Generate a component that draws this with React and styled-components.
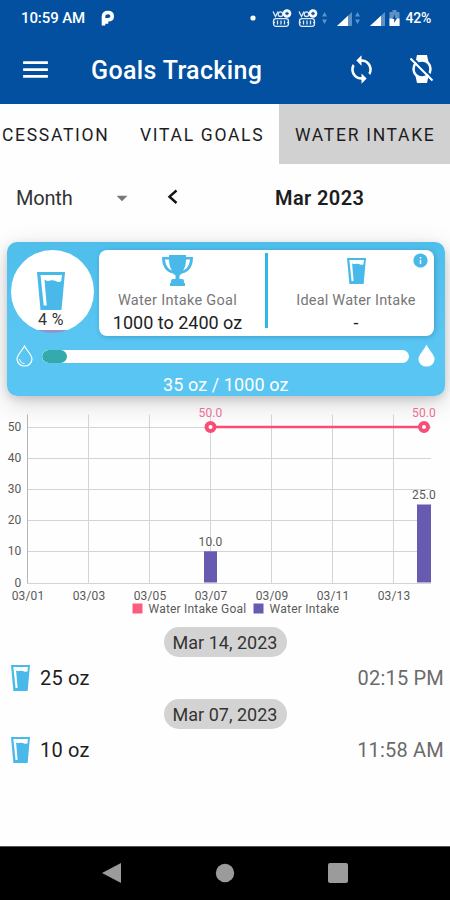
import styled, { createGlobalStyle } from "styled-components";
import { MdMenu, MdSync, MdArrowDropDown, MdInfo } from "react-icons/md";

const GlobalStyle = createGlobalStyle`
    * {
        box-sizing: border-box;
    }
    body {
        margin: 0;
        background: #fff;
        font-family: Roboto, "Liberation Sans", sans-serif;
    }
    svg {
        display: block;
        flex-shrink: 0;
    }
`
const Screen = styled.div`
    width: 450px;
    height: 900px;
    display: flex;
    flex-direction: column;
    overflow: hidden;
    background: #fefefe;
    color: #1d1d1f;
`
const Header = styled.header`
    height: 104px;
    background: #02509f;
    color: #fff;
`
const StatusBar = styled.div`
    height: 36px;
    padding: 0 19px 0 21px;
    display: flex;
    align-items: center;
    justify-content: space-between;
    font-size: 15px;
    font-weight: 500;
    white-space: nowrap;
`
const StatusLeft = styled.div`
    display: flex;
    align-items: center;
    gap: 16px;
    letter-spacing: -0.1px;
`
const StatusRight = styled.div`
    display: flex;
    align-items: center;
    font-size: 14px;
    letter-spacing: -0.2px;
`
const StatusItem = styled.div`
    margin-left: ${(props) => props.$gap}px;
`
const AppBar = styled.div`
    height: 68px;
    padding: 0 16px 2px 19px;
    display: flex;
    align-items: center;
`
const AppTitle = styled.h1`
    flex: 1;
    margin: 2px 0 0 39px;
    font-size: 25px;
    font-weight: 500;
    letter-spacing: 0.35px;
`
const Actions = styled.div`
    display: flex;
    align-items: center;
    gap: 33px;
`
const Tabs = styled.nav`
    height: 60px;
    display: flex;
    overflow: hidden;
`
const Tab = styled.div`
    width: ${(props) => props.$width}px;
    padding-left: ${(props) => props.$pad}px;
    padding-top: 2px;
    flex-shrink: 0;
    display: flex;
    align-items: center;
    white-space: nowrap;
    font-size: 17.5px;
    letter-spacing: 1.7px;
    background: ${(props) => (props.$active ? "#d1d1d1" : "transparent")};
`
const Period = styled.div`
    height: 78px;
    padding: 0 0 11px 16px;
    display: flex;
    align-items: center;
`
const RangeSelect = styled.div`
    width: 119px;
    display: flex;
    align-items: center;
    justify-content: space-between;
    font-size: 20px;
    letter-spacing: -0.2px;
    color: #333;
    svg {
        color: #777;
    }
`
const Previous = styled.div`
    margin-left: 31px;
`
const Month = styled.div`
    margin-left: 96px;
    font-size: 20px;
    font-weight: 600;
    letter-spacing: 0.4px;
`
const Card = styled.section`
    height: 154px;
    flex-shrink: 0;
    margin: 0 5.5px 0 6.5px;
    padding: 8px 10.5px 0 4px;
    border-radius: 10px;
    background: linear-gradient(#4fbeeb, #59c5f2 60%);
    box-shadow: 0 3px 8px rgba(0, 0, 0, 0.13), 0 7px 26px rgba(0, 0, 0, 0.17);
    position: relative;
`
const CardTop = styled.div`
    display: flex;
    justify-content: space-between;
`
const Gauge = styled.div`
    width: 83px;
    height: 83px;
    padding: 22px 2px 0 0;
    border-radius: 50%;
    overflow: hidden;
    display: flex;
    flex-direction: column;
    align-items: center;
    background: linear-gradient(#fff 80px, #9a8fca 80px);
    font-size: 16px;
    line-height: 19px;
    letter-spacing: 0.4px;
    color: #333;
`
const Panel = styled.div`
    width: 335px;
    height: 86px;
    border-radius: 8px;
    background: #fff;
    box-shadow: 1px 1px 5px rgba(0, 60, 100, 0.28);
    display: flex;
    position: relative;
`
const Goal = styled.div`
    width: 166px;
    padding: 5px ${(props) => props.$right || 0}px 0 ${(props) => props.$left || 0}px;
    display: flex;
    flex-direction: column;
    align-items: center;
    white-space: nowrap;
`
const GoalName = styled.div`
    margin-top: 5px;
    font-size: 14.5px;
    line-height: 19px;
    letter-spacing: ${(props) => props.$spacing}px;
    color: #777;
`
const GoalValue = styled.div`
    margin-top: 2px;
    font-size: 18px;
    line-height: 21px;
    color: #222;
`
const Divider = styled.div`
    width: 3px;
    height: 75px;
    margin-top: 3px;
    background: #2db8e8;
`
const InfoBadge = styled.div`
    position: absolute;
    top: 2px;
    right: 5px;
    color: #48b9e9;
`
const ProgressRow = styled.div`
    height: 22px;
    margin-top: 9px;
    padding: 0 0 0 5px;
    display: flex;
    align-items: center;
    justify-content: space-between;
    margin-right: -1px;
`
const Track = styled.div`
    width: 367px;
    height: 13px;
    border-radius: 7px;
    background: #fff;
    overflow: hidden;
`
const Fill = styled.div`
    height: 100%;
    border-radius: 7px;
    background: #34aaad;
`
const Amount = styled.div`
    padding: 7px 0 0 7px;
    text-align: center;
    font-size: 18px;
    line-height: 22px;
    letter-spacing: 0.1px;
    color: #fff;
`
const ChartArea = styled.div`
    height: 231px;
    flex-shrink: 0;
    position: relative;
`
const Day = styled.div`
    height: 72px;
    flex-shrink: 0;
    display: flex;
    flex-direction: column;
    align-items: center;
`
const DayLabel = styled.div`
    width: 123px;
    height: 30px;
    border-radius: 15px;
    background: #d3d3d3;
    text-align: center;
    font-size: 18px;
    line-height: 31px;
    color: #333;
`
const Entry = styled.div`
    width: 100%;
    height: 42px;
    padding: 0 6px 0 11px;
    display: flex;
    align-items: center;
    font-size: 20px;
`
const EntryAmount = styled.span`
    flex: 1;
    margin-left: 10px;
    letter-spacing: 0.2px;
`
const EntryTime = styled.span`
    color: #6b6b6b;
    letter-spacing: 0.2px;
`
const NavBar = styled.footer`
    height: 54px;
    flex-shrink: 0;
    margin-top: auto;
    padding: 0 102px 2px;
    display: flex;
    align-items: center;
    justify-content: space-between;
    background: #000;
    border-top: 1px solid #555;
`

const Glass = ({ width, height }) => (
    <svg width={width} height={height} viewBox="0 0 28 38" preserveAspectRatio="none">
        <path d="M0 0H28L24.5 38H3.5Z" fill="#49b9e9" />
        <path d="M3.500 3H25L24.300 9C21 12 18 7.200 13.500 8.500 11 9.200 9 9 7.500 7.500L9.700 33.500H6.700Z" fill="#fff" />
    </svg>
)

const Trophy = () => (
    <svg width="31" height="31" viewBox="0 0 31 31" fill="#49b9e9">
        <path d="M7 0H24V2H31C31 11 27.500 17 20 18.500L17.500 20.500V24H20Q22 24 22 26V28H23V31H8V28H9V26Q9 24 11 24H13.500V20.500L11 18.500C3.500 17 0 11 0 2H7Z" />
        <path d="M3 4.500H7C7 9 8 13 10 15.500 6 14 3.500 10 3 4.500ZM28 4.500H24C24 9 23 13 21 15.500 25 14 27.500 10 28 4.500Z" fill="#fff" />
    </svg>
)

const Drop = ({ filled }) => (
    <svg width="17" height="22" viewBox="0 0 17 22">
        <path
            d="M8.500 1C6 6 1 10 1 14A7.500 7 0 0 0 16 14C16 10 11 6 8.500 1Z"
            fill={filled ? "#fff" : "none"}
            stroke="#fff"
            strokeWidth="1.200"
        />
        {!filled && <path d="M3.500 14C4 17 6 18.500 8.500 18.500" fill="none" stroke="#fff" />}
    </svg>
)

const WatchOff = () => (
    <svg width="24" height="30" viewBox="0 0 24 30">
        <path d="M7 1H17L18.500 8H5.500ZM5.500 22H18.500L17 29H7Z" fill="#fff" />
        <circle cx="12" cy="15" r="8.500" fill="#02509f" stroke="#fff" strokeWidth="2.500" />
        <path d="M2 3L24 25" stroke="#02509f" strokeWidth="1.800" />
        <path d="M.5 4.500L22.500 26.500" stroke="#fff" strokeWidth="2" />
    </svg>
)

const VoLte = () => (
    <svg width="20" height="19" viewBox="0 0 20 19" fill="none" stroke="#dfe9f5" strokeWidth="1.300">
        <path d="M1 2.500L3.500 7.500 6 2.500" />
        <circle cx="8.500" cy="5.200" r="2.300" />
        <circle cx="15" cy="4.500" r="4.300" fill="#fff" stroke="none" />
        <path d="M15 2.700V6.300M13.200 4.500H16.800" stroke="#02509f" />
        <rect x="1.500" y="9.700" width="15" height="7.600" rx="2.500" />
        <path d="M1.500 13.500H3M15 13.500H16.500M5.500 11.500V15.500M9 11.500V15.500M12.500 11.500V15.500" />
    </svg>
)

const Arrows = () => (
    <svg width="7" height="14" viewBox="0 0 7 14" fill="#5d91c9">
        <path d="M1 5.500L3.500 1 6 5.500ZM1 8.500H6L3.500 13Z" />
    </svg>
)

const Signal = () => (
    <svg width="16" height="15" viewBox="0 0 16 15">
        <path d="M0 15L15 1V15Z" fill="#5e91c6" />
        <path d="M0 15L11 4.700V15Z" fill="#fff" />
    </svg>
)

const Battery = () => (
    <svg width="11" height="16" viewBox="0 0 11 16">
        <path d="M3.500 0H7.500V2H10.500V16H.5V2H3.500Z" fill="#5e91c6" />
        <path d="M.5 8.500H10.500V16H.5Z" fill="#fff" />
        <path d="M6 4L3.500 9H5.200V13L8 8H6Z" fill="#02509f" />
    </svg>
)

const days = ["03/01", "03/03", "03/05", "03/07", "03/09", "03/11", "03/13"]
const levels = [0, 10, 20, 30, 40, 50]
const intake = [
    { x: 210.5, value: 10, width: 13 },
    { x: 424, value: 25, width: 14 },
]
const toX = (index) => 27.5 + index * 61
const toY = (value) => 186.5 - value * 3.12

const IntakeChart = () => (
    <svg width="450" height="231" viewBox="0 0 450 231" fontSize="12" fill="#5a5a5a" letterSpacing="0.15">
        {levels.map((level) => (
            <g key={level}>
                <path d={`M27 ${Math.round(toY(level)) + 0.5}H431`} stroke="#d4d4d4" />
                <text x="21.500" y={toY(level) + 4} textAnchor="end">{level}</text>
            </g>
        ))}
        {days.map((day, index) => (
            <g key={day}>
                <path d={`M${toX(index)} 18.500V187`} stroke={index ? "#d4d4d4" : "#b5b5b5"} />
                <text x={toX(index) + 0.5} y="203.500" textAnchor="middle">{day}</text>
            </g>
        ))}
        <path d="M210.500 31H424" stroke="#f84d77" strokeWidth="2.500" />
        {intake.map((item) => (
            <g key={item.x}>
                <rect x={item.x - item.width / 2} y={toY(item.value)} width={item.width} height={item.value * 3.12} fill="#665bb0" />
                <text x={item.x} y={toY(item.value) - 5.5} textAnchor="middle">{item.value.toFixed(1)}</text>
                <text x={item.x} y="20.500" textAnchor="middle" fill="#ed6e91">50.0</text>
                <circle cx={item.x} cy="31" r="4" fill="#fff" stroke="#f84d77" strokeWidth="4" />
            </g>
        ))}
        <rect x="132.500" y="207.500" width="10" height="10" fill="#fb5c80" />
        <text x="148.500" y="217" letterSpacing="0.200">Water Intake Goal</text>
        <rect x="253.500" y="207.500" width="10" height="10" fill="#665bb0" />
        <text x="269.500" y="217" letterSpacing="0.250">Water Intake</text>
    </svg>
)

const entries = [
    { date: "Mar 14, 2023", amount: "25 oz", time: "02:15 PM" },
    { date: "Mar 07, 2023", amount: "10 oz", time: "11:58 AM" },
]

const App = () => {
    return (
        <Screen>
            <GlobalStyle />
            <Header>
                <StatusBar>
                    <StatusLeft>
                        10:59 AM
                        <svg width="14" height="16" viewBox="0 0 14 16">
                            <path d="M2.500 15.500V6.500Q2.500 2.500 7 2.500 11.200 2.500 11.200 6.200 11.200 9.800 7 9.800H5.500V12H2.500" fill="none" stroke="#fff" strokeWidth="3.600" />
                        </svg>
                    </StatusLeft>
                    <StatusRight>
                        <svg width="6" height="6" viewBox="0 0 6 6">
                            <circle cx="3" cy="3" r="2.600" fill="#fff" />
                        </svg>
                        <StatusItem $gap={16}><VoLte /></StatusItem>
                        <StatusItem $gap={6}><VoLte /></StatusItem>
                        <StatusItem $gap={3}><Arrows /></StatusItem>
                        <StatusItem $gap={9}><Signal /></StatusItem>
                        <StatusItem $gap={1}><Arrows /></StatusItem>
                        <StatusItem $gap={9}><Signal /></StatusItem>
                        <StatusItem $gap={3}><Battery /></StatusItem>
                        <StatusItem $gap={5}>42%</StatusItem>
                    </StatusRight>
                </StatusBar>
                <AppBar>
                    <MdMenu size={33} />
                    <AppTitle>Goals Tracking</AppTitle>
                    <Actions>
                        <MdSync size={31} />
                        <WatchOff />
                    </Actions>
                </AppBar>
            </Header>
            <Tabs>
                <Tab $width={124} $pad={2}>CESSATION</Tab>
                <Tab $width={155} $pad={16}>VITAL GOALS</Tab>
                <Tab $width={171} $pad={16} $active>WATER INTAKE</Tab>
            </Tabs>
            <Period>
                <RangeSelect>
                    Month
                    <MdArrowDropDown size={26} />
                </RangeSelect>
                <Previous>
                    <svg width="13" height="17" viewBox="0 0 13 17">
                        <path d="M10.500 1.500L3.500 7.700 10.500 14" fill="none" stroke="#111" strokeWidth="2.400" />
                    </svg>
                </Previous>
                <Month>Mar 2023</Month>
            </Period>
            <Card>
                <CardTop>
                    <Gauge>
                        <Glass width={28} height={38} />
                        4 %
                    </Gauge>
                    <Panel>
                        <Goal $right={9}>
                            <Trophy />
                            <GoalName $spacing={0.3}>Water Intake Goal</GoalName>
                            <GoalValue>1000 to 2400 oz</GoalValue>
                        </Goal>
                        <Divider />
                        <Goal $left={10}>
                            <svg width="19" height="31" viewBox="0 0 19 31">
                                <g transform="translate(0 3)">
                                    <Glass width={19} height={26} />
                                </g>
                            </svg>
                            <GoalName $spacing={0.2}>Ideal Water Intake</GoalName>
                            <GoalValue>-</GoalValue>
                        </Goal>
                        <InfoBadge>
                            <MdInfo size={17} />
                        </InfoBadge>
                    </Panel>
                </CardTop>
                <ProgressRow>
                    <Drop />
                    <Track>
                        <Fill style={{ width: "7%" }} />
                    </Track>
                    <Drop filled />
                </ProgressRow>
                <Amount>35 oz / 1000 oz</Amount>
            </Card>
            <ChartArea>
                <IntakeChart />
            </ChartArea>
            {entries.map((entry) => (
                <Day key={entry.date}>
                    <DayLabel>{entry.date}</DayLabel>
                    <Entry>
                        <Glass width={19} height={26} />
                        <EntryAmount>{entry.amount}</EntryAmount>
                        <EntryTime>{entry.time}</EntryTime>
                    </Entry>
                </Day>
            ))}
            <NavBar>
                <svg width="20" height="22" viewBox="0 0 20 22">
                    <path d="M0 11L19 1V21Z" fill="#9b9b9b" />
                </svg>
                <svg width="20" height="20" viewBox="0 0 20 20">
                    <circle cx="10" cy="10" r="9.200" fill="#9b9b9b" />
                </svg>
                <svg width="20" height="20" viewBox="0 0 20 20">
                    <rect width="20" height="20" rx="2" fill="#9b9b9b" />
                </svg>
            </NavBar>
        </Screen>
    )
}

export default App;
